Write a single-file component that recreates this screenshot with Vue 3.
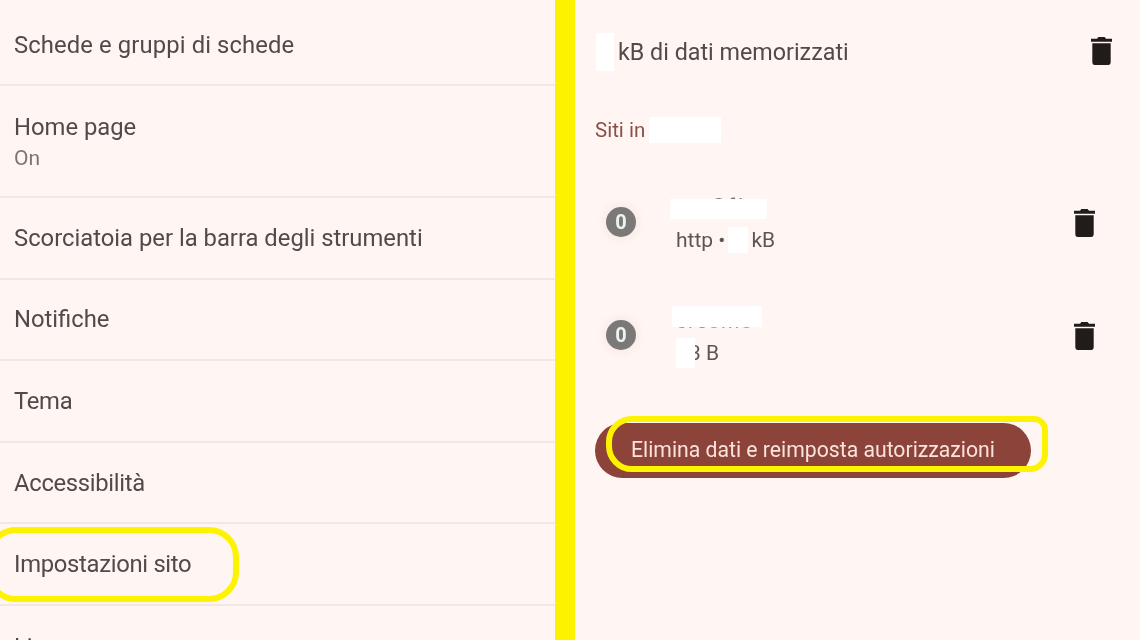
<script setup>
const items = [
  { title: 'Schede e gruppi di schede', cls: 'first wide' },
  { title: 'Home page', sub: 'On', cls: 'tall' },
  { title: 'Scorciatoia per la barra degli strumenti' },
  { title: 'Notifiche' },
  { title: 'Tema', cls: 'tight' },
  { title: 'Accessibilità', cls: 'tight' },
  { title: 'Impostazioni sito', circled: true, cls: 'tight' },
  { title: 'Lingue', cls: 'last' },
]
const trash = 'M6.8 21C5.8 21 5 20.2 5 19.2V7h14v12.2c0 1-.8 1.8-1.8 1.8H6.8ZM4 6V4.2h4.6L9.6 3h4.8l1 1.2H20V6H4Z'
</script>

<template>
  <div class="page">
    <section class="left">
      <div v-for="it in items" :key="it.title" class="row" :class="it.cls">
        <div class="row-title">{{ it.title }}</div>
        <div v-if="it.sub" class="row-sub">{{ it.sub }}</div>
        <span v-if="it.circled" class="ring-site"></span>
      </div>
    </section>
    <div class="bar"></div>
    <section class="right">
      <div class="summary">
        <div class="summary-text"><span class="mask mask-size"></span>kB di dati memorizzati</div>
        <svg class="trash" viewBox="4 3 16 18" preserveAspectRatio="none"><path :d="trash" /></svg>
      </div>
      <div class="heading">Siti in<span class="mask mask-head"></span></div>
      <div class="site site-a">
        <div class="badge">0</div>
        <div class="site-body">
          <div class="site-name">
            <span class="name-text name-a">a.2fi</span>
            <span class="mask mask-name"></span>
          </div>
          <div class="site-info">http •<span class="mask mask-num"></span>kB</div>
        </div>
        <svg class="trash" viewBox="4 3 16 18" preserveAspectRatio="none"><path :d="trash" /></svg>
      </div>
      <div class="site site-b">
        <div class="badge">0</div>
        <div class="site-body">
          <div class="site-name">
            <span class="name-text name-b">creomo</span>
            <span class="mask mask-name2"></span>
          </div>
          <div class="site-info info-b">3 B<span class="mask mask-num2"></span></div>
        </div>
        <svg class="trash" viewBox="4 3 16 18" preserveAspectRatio="none"><path :d="trash" /></svg>
      </div>
      <div class="action">
        <button class="btn">Elimina dati e reimposta autorizzazioni</button>
        <span class="ring-btn"></span>
      </div>
    </section>
  </div>
</template>

<style>
html, body { margin: 0; background: #fff5f3; }
</style>

<style scoped>
.page {
  display: flex;
  width: 1140px;
  height: 640px;
  overflow: hidden;
  background: #fff5f3;
  font-family: Roboto, "Liberation Sans", sans-serif;
  color: #504a48;
  filter: blur(0.45px);
}
.left { width: 555px; flex: none; }
.bar { width: 20px; flex: none; background: #fdf200; }
.right { flex: 1; padding-left: 20px; padding-right: 28px; box-sizing: border-box; }

.row {
  position: relative;
  height: 81.6px;
  box-sizing: border-box;
  border-bottom: 2px solid #f1e8e6;
  display: flex;
  flex-direction: column;
  justify-content: center;
  padding-left: 14px;
}
.row.first { height: 86px; padding-top: 5px; }
.row.tall { height: 112px; padding-bottom: 0; }
.row.last { border-bottom: 0; }
.row.tight .row-title { letter-spacing: -0.3px; }
.row.wide .row-title { letter-spacing: 0.12px; }
.row-title { font-size: 23.8px; line-height: 30px; }
.row-sub { font-size: 21px; line-height: 26px; color: #7d7573; margin-top: 3px; }
.ring-site {
  position: absolute;
  left: -14px;
  top: 3px;
  width: 253px;
  height: 75px;
  box-sizing: border-box;
  border: 6px solid #fdf200;
  border-radius: 30px;
}

.summary {
  height: 104px;
  display: flex;
  align-items: center;
  justify-content: space-between;
}
.summary-text { font-size: 23.3px; display: flex; align-items: center; }
.mask { display: inline-block; background: #fff; }
.mask-size { width: 18px; height: 38px; margin: 0 4px 0 1px; }
.heading {
  height: 26px;
  margin-top: 13px;
  font-size: 20.5px;
  line-height: 26px;
  color: #8c4f48;
  display: flex;
  align-items: center;
}
.mask-head { width: 72px; height: 26px; margin-left: 4px; }

.site { display: flex; align-items: flex-start; position: relative; }
.site-a { margin-top: 56px; height: 113px; }
.site-b { height: 111px; }
.badge {
  width: 30px;
  height: 30px;
  margin: 8px 0 0 11px;
  flex: none;
  border-radius: 50%;
  background: #7b7977;
  color: #eef2ef;
  font-size: 20px;
  font-weight: 700;
  line-height: 30px;
  text-align: center;
  box-shadow: 0 0 6px 4px #faece9;
}
.site-body { margin-left: 40px; flex: 1; }
.site-name { position: relative; height: 27px; }
.name-text { position: absolute; left: 0; font-size: 21px; line-height: 27px; white-space: nowrap; }
.name-a { top: -6px; left: 14px; letter-spacing: 3px; color: #777; }
.name-b { top: -4px; letter-spacing: 1px; color: #999; }
.mask-name { position: absolute; left: -6px; top: 0; width: 97px; height: 20px; }
.mask-name2 { position: absolute; left: -4px; top: -6px; width: 90px; height: 21px; }
.site-info { position: relative; font-size: 21px; line-height: 28px; display: flex; align-items: center; color: #5e5654; }
.info-b { padding-left: 13px; }
.mask-num { width: 20px; height: 26px; margin: 0 3px; }
.mask-num2 { position: absolute; left: 0; top: -1px; width: 19px; height: 30px; }
.trash { width: 21px; height: 28px; flex: none; fill: #211b1a; }
.site .trash { margin: 9.5px 17px 0 0; }
.summary .trash { margin: -2px 0 0 0; }

.action { position: relative; width: 436px; }
.btn {
  display: block;
  width: 436px;
  height: 55px;
  border: 0;
  border-radius: 28px;
  background: #8c4339;
  color: #fbe3dd;
  font-family: inherit;
  font-size: 21.2px;
  text-align: left;
  padding: 0 0 3px 36px;
  white-space: nowrap;
}
.ring-btn {
  position: absolute;
  left: 11px;
  top: -7px;
  width: 442px;
  height: 56px;
  box-sizing: border-box;
  border: 6px solid #fdf200;
  border-radius: 26px 14px 18px 26px;
}
</style>
